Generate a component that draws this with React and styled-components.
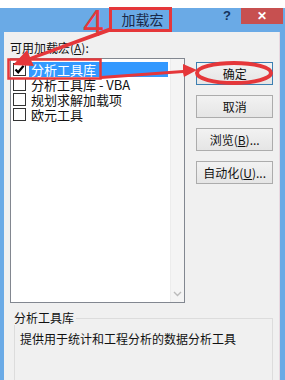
import React from "react";
import styled, { createGlobalStyle } from "styled-components";

const Global = createGlobalStyle`
  html, body { margin: 0; padding: 0; background: #fff; }
  body { width: 285px; height: 380px; overflow: hidden; position: relative;
    font-family: "Noto Sans CJK SC", "Noto Sans", sans-serif; color: #111; }
`;

const Window = styled.div`
  margin-top: 8px;
  height: 372px;
  background: #6aaae6;
  display: flex;
  flex-direction: column;
`;

const TitleBar = styled.div`
  height: 24px;
  display: flex;
  align-items: flex-start;
  position: relative;
`;

const Title = styled.div`
  position: absolute;
  left: 0; right: 0; top: 2px;
  text-align: center;
  font-size: 14px;
  line-height: 18px;
  color: #1a2a4a;
`;

const Help = styled.div`
  margin-left: auto;
  width: 18px;
  font: bold 13px "Liberation Sans", sans-serif;
  color: #14325c;
  line-height: 16px;
`;

const Close = styled.div`
  width: 42px;
  height: 16px;
  margin-right: 2px;
  background: #c75050;
  color: #fff;
  font: bold 12px "Liberation Sans", sans-serif;
  line-height: 16px;
  text-align: center;
`;

const Body = styled.div`
  flex: 1;
  margin: 0 5px 0 4px;
  background: #f0f0f0;
  padding: 8px 6px 0 6px;
  display: flex;
  flex-direction: column;
  border-right: 1px solid #e8d8e0;
`;

const Top = styled.div`
  display: flex;
  gap: 11px;
`;

const LeftCol = styled.div`
  width: 176px;
  display: flex;
  flex-direction: column;
`;

const Label = styled.div`
  font-size: 12px;
  line-height: 16px;
  margin-bottom: 2px;
  u { text-decoration: underline; }
`;

const ListBox = styled.div`
  height: 245px;
  box-sizing: border-box;
  border: 1px solid #828790;
  background: #fff;
  display: flex;
`;

const Items = styled.div`
  flex: 1;
  padding: 3px 2px;
  display: flex;
  flex-direction: column;
`;

const Row = styled.div`
  height: 15px;
  display: flex;
  align-items: center;
  gap: 3px;
`;

const Box = styled.div`
  width: 11px;
  height: 11px;
  border: 1px solid #333;
  background: #fff;
  flex: none;
  display: flex;
  align-items: center;
  justify-content: center;
`;

const ItemText = styled.div`
  flex: 1;
  height: 15px;
  line-height: 15px;
  font-size: 13px;
  padding-left: 2px;
  background: ${(p) => (p.$sel ? "#3399ff" : "transparent")};
  color: ${(p) => (p.$sel ? "#fff" : "#111")};
`;

const Scroll = styled.div`
  width: 13px;
  background: #f4f4f4;
  border-left: 1px solid #ececec;
  display: flex;
  flex-direction: column;
  justify-content: flex-end;
  align-items: center;
  padding-bottom: 5px;
`;

const Buttons = styled.div`
  margin-top: 22px;
  width: 77px;
  display: flex;
  flex-direction: column;
  gap: 10px;
`;

const Button = styled.div`
  height: 23px;
  box-sizing: border-box;
  border: 1px solid ${(p) => (p.$def ? "#3c7fb1" : "#acacac")};
  background: linear-gradient(#f2f2f2, #e5e5e5);
  font-size: 12px;
  line-height: 21px;
  text-align: center;
  u { text-decoration: underline; }
`;

const Group = styled.fieldset`
  margin: 8px 0 0 4px;
  flex: 1;
  border: 1px solid #dcdcdc;
  border-bottom: none;
  padding: 6px 5px 0 5px;
  min-width: 0;
`;

const Legend = styled.legend`
  font-size: 12px;
  line-height: 14px;
  padding: 0 2px 0 0;
  margin-left: -6px;
  background: #f0f0f0;
`;

const Desc = styled.div`
  font-size: 12px;
  line-height: 16px;
`;

const Overlay = styled.svg`
  position: absolute;
  left: 0;
  top: 0;
  pointer-events: none;
`;

const Four = styled.span`
  position: absolute;
  left: 83px;
  top: 0px;
  font: 400 36px "Open Sans", sans-serif;
  line-height: 46px;
  color: #e5373a;
`;

const Check = () => (
  <svg width="11" height="11" viewBox="0 0 11 11">
    <path d="M1.5 5.5 L4.2 8.3 L9.6 1.8" fill="none" stroke="#000" strokeWidth="2.2" />
  </svg>
);

const items = [
  { t: "分析工具库", on: true, sel: true },
  { t: "分析工具库 - VBA" },
  { t: "规划求解加载项" },
  { t: "欧元工具" },
];

export default function App() {
  return (
    <>
      <Global />
      <Window>
        <TitleBar>
          <Title>加载宏</Title>
          <Help>?</Help>
          <Close>✕</Close>
        </TitleBar>
        <Body>
          <Top>
            <LeftCol>
              <Label>可用加载宏(<u>A</u>):</Label>
              <ListBox>
                <Items>
                  {items.map((it) => (
                    <Row key={it.t}>
                      <Box>{it.on && <Check />}</Box>
                      <ItemText $sel={it.sel}>{it.t}</ItemText>
                    </Row>
                  ))}
                </Items>
                <Scroll>
                  <svg width="9" height="6" viewBox="0 0 9 6">
                    <path d="M1 1 L4.5 4.5 L8 1" fill="none" stroke="#bbb" strokeWidth="1.4" />
                  </svg>
                </Scroll>
              </ListBox>
            </LeftCol>
            <Buttons>
              <Button $def>确定</Button>
              <Button>取消</Button>
              <Button>浏览(<u>B</u>)...</Button>
              <Button>自动化(<u>U</u>)...</Button>
            </Buttons>
          </Top>
          <Group>
            <Legend>分析工具库</Legend>
            <Desc>提供用于统计和工程分析的数据分析工具</Desc>
          </Group>
        </Body>
      </Window>
      <Four>4</Four>
      <Overlay width="285" height="380" viewBox="0 0 285 380">
        <rect x="110.5" y="8.5" width="60" height="22" fill="none" stroke="#e5373a" strokeWidth="3" />
        <rect x="8.5" y="59.5" width="92" height="19" fill="none" stroke="#e5373a" strokeWidth="2.5" />
        <ellipse cx="234" cy="73" rx="37" ry="10" fill="none" stroke="#e5373a" strokeWidth="4" />
        <path d="M111 27 L30 57 L27 50 L13 65 L34 66 L31 60 L112 31 Z" fill="#e5373a" />
        <path d="M101 76 L183 70 L183 64 L197 70 L184 77 L183 73 L101 79 Z" fill="#e5373a" />
      </Overlay>
    </>
  );
}
